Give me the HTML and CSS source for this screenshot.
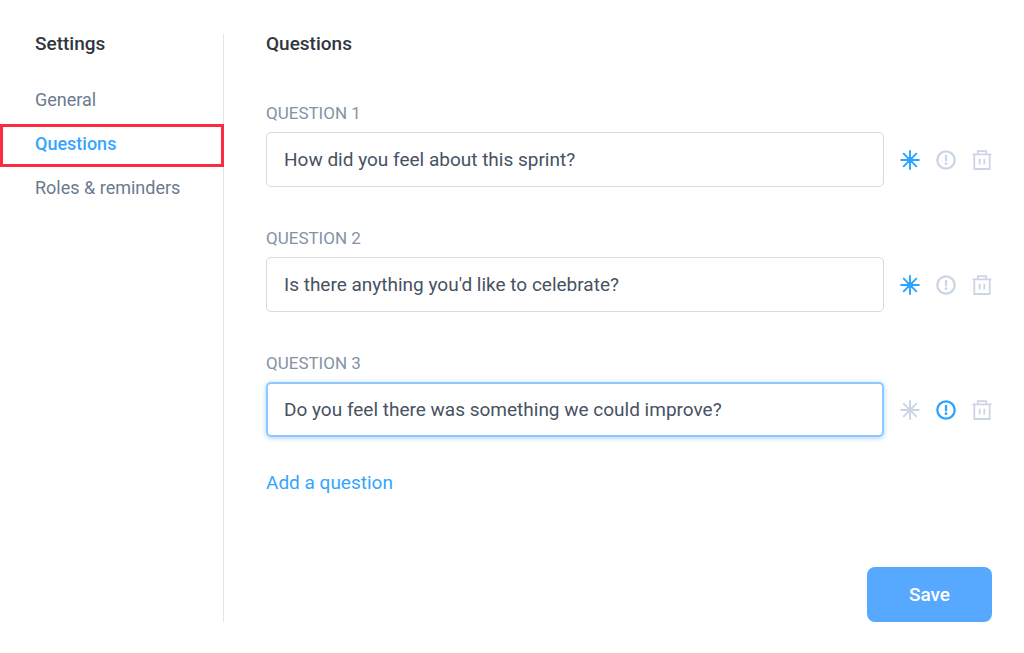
FILE: index.html
```html
<!DOCTYPE html>
<html lang="en">
<head>
    <meta charset="utf-8">
    <meta name="viewport" content="width=device-width, initial-scale=1">
    <title>Settings - Questions</title>
    <link rel="stylesheet" href="styles.css">
</head>
<body>
    <!-- Shared icons -->
    <svg class="sprite" aria-hidden="true">
        <symbol id="star" viewBox="0 0 20 20">
            <path d="M10 0.2v19.6M0.4 10h19.2M3.2 3.2l13.6 13.6M16.8 3.2L3.2 16.8" fill="none" stroke="currentColor" stroke-width="1.9"/>
            <circle cx="10" cy="10" r="3" fill="currentColor"/>
        </symbol>
        <symbol id="alert" viewBox="0 0 20 20">
            <circle cx="10" cy="10" r="8.7" fill="none" stroke="currentColor" stroke-width="2.3"/>
            <path d="M10 5.8v4.6" fill="none" stroke="currentColor" stroke-width="2.3" stroke-linecap="round"/>
            <circle cx="10" cy="13.7" r="1.4" fill="currentColor"/>
        </symbol>
        <symbol id="trash" viewBox="0 0 20 20">
            <path d="M0.5 4.4h19M2.3 4.4v14.6h15.4V4.4M5.8 4.4V1.1h8.4v3.3M7.7 8.8v5.6M12.3 8.8v5.6" fill="none" stroke="currentColor" stroke-width="1.8"/>
        </symbol>
    </svg>

    <div class="page">
        <nav class="sidebar">
            <h2>Settings</h2>
            <ul>
                <li><a href="#general">General</a></li>
                <li><a href="#questions" class="active">Questions</a></li>
                <li><a href="#roles">Roles &amp; reminders</a></li>
            </ul>
        </nav>

        <form class="content">
            <h2>Questions</h2>

            <div class="question">
                <label for="q1">QUESTION 1</label>
                <div class="row">
                    <input type="text" id="q1" value="How did you feel about this sprint?">
                    <button type="button" class="icon on" aria-label="Required"><svg><use href="#star"/></svg></button>
                    <button type="button" class="icon" aria-label="Alert"><svg><use href="#alert"/></svg></button>
                    <button type="button" class="icon" aria-label="Delete"><svg><use href="#trash"/></svg></button>
                </div>
            </div>

            <div class="question">
                <label for="q2">QUESTION 2</label>
                <div class="row">
                    <input type="text" id="q2" value="Is there anything you'd like to celebrate?">
                    <button type="button" class="icon on" aria-label="Required"><svg><use href="#star"/></svg></button>
                    <button type="button" class="icon" aria-label="Alert"><svg><use href="#alert"/></svg></button>
                    <button type="button" class="icon" aria-label="Delete"><svg><use href="#trash"/></svg></button>
                </div>
            </div>

            <div class="question">
                <label for="q3">QUESTION 3</label>
                <div class="row">
                    <input type="text" id="q3" class="current" value="Do you feel there was something we could improve?">
                    <button type="button" class="icon" aria-label="Required"><svg><use href="#star"/></svg></button>
                    <button type="button" class="icon on" aria-label="Alert"><svg><use href="#alert"/></svg></button>
                    <button type="button" class="icon" aria-label="Delete"><svg><use href="#trash"/></svg></button>
                </div>
            </div>

            <a href="#add" class="add">Add a question</a>
            <button type="submit" class="save">Save</button>
        </form>
    </div>
</body>
</html>
```
FILE: styles.css
```css
* {
    box-sizing: border-box;
}

body {
    margin: 0;
    background-color: #fff;
    font-family: Roboto, "Liberation Sans", sans-serif;
}

.sprite {
    display: none;
}

.page {
    display: flex;
    padding: 34px 32px 31px 0;
}

h2 {
    margin: 0;
    font-size: 19px;
    line-height: 20px;
    font-weight: 500;
    color: #32363e;
}

.sidebar {
    width: 224px;
    flex-shrink: 0;
    border-right: 1px solid #dfe6f0;
}

.sidebar h2 {
    padding-left: 35px;
}

.sidebar ul {
    list-style: none;
    margin: 24px 0 0;
    padding: 0;
}

.sidebar a {
    display: block;
    position: relative;
    padding-left: 35px;
    font-size: 18px;
    line-height: 44px;
    color: #6b7a8f;
    text-decoration: none;
}

.sidebar a.active {
    color: #34a5ff;
    font-weight: 500;
}

/* red frame, lies over the sidebar border */
.sidebar a.active::after {
    content: "";
    position: absolute;
    inset: 2px -1px -1px 0;
    border: 3px solid #fb2c42;
}

.content {
    flex: 1;
    min-width: 0;
    display: flex;
    flex-direction: column;
    align-items: flex-start;
    padding-left: 42px;
}

.content h2 {
    margin-bottom: 49px;
}

.question {
    width: 100%;
    margin-bottom: 41px;
}

.question label {
    display: block;
    margin-bottom: 9px;
    font-size: 17px;
    line-height: 20px;
    color: #8492a6;
}

.row {
    display: flex;
    align-items: center;
    gap: 16px;
}

.row input {
    flex: 1;
    min-width: 0;
    height: 55px;
    padding: 0 17px;
    border: 1px solid #d3dae8;
    border-radius: 5px;
    font-family: inherit;
    font-size: 19px;
    color: #475262;
    outline: none;
}

.row input.current {
    border: 2px solid #8fc8ff;
    padding: 0 16px;
    box-shadow: 0 1px 5px rgba(52, 150, 255, 0.45);
}

.icon {
    width: 20px;
    height: 20px;
    padding: 0;
    border: none;
    background: none;
    color: #ccd5e5;
    cursor: pointer;
}

.icon.on {
    color: #2ba3ff;
}

.icon svg {
    display: block;
    width: 20px;
    height: 20px;
}

.add {
    margin-top: -7px;
    font-size: 19px;
    line-height: 24px;
    color: #34a5ff;
    text-decoration: none;
}

.save {
    align-self: flex-end;
    width: 125px;
    height: 55px;
    margin-top: 72px;
    border: none;
    border-radius: 8px;
    background-color: #57a8ff;
    color: #fff;
    font-family: inherit;
    font-size: 19px;
    font-weight: 500;
    cursor: pointer;
}
```
